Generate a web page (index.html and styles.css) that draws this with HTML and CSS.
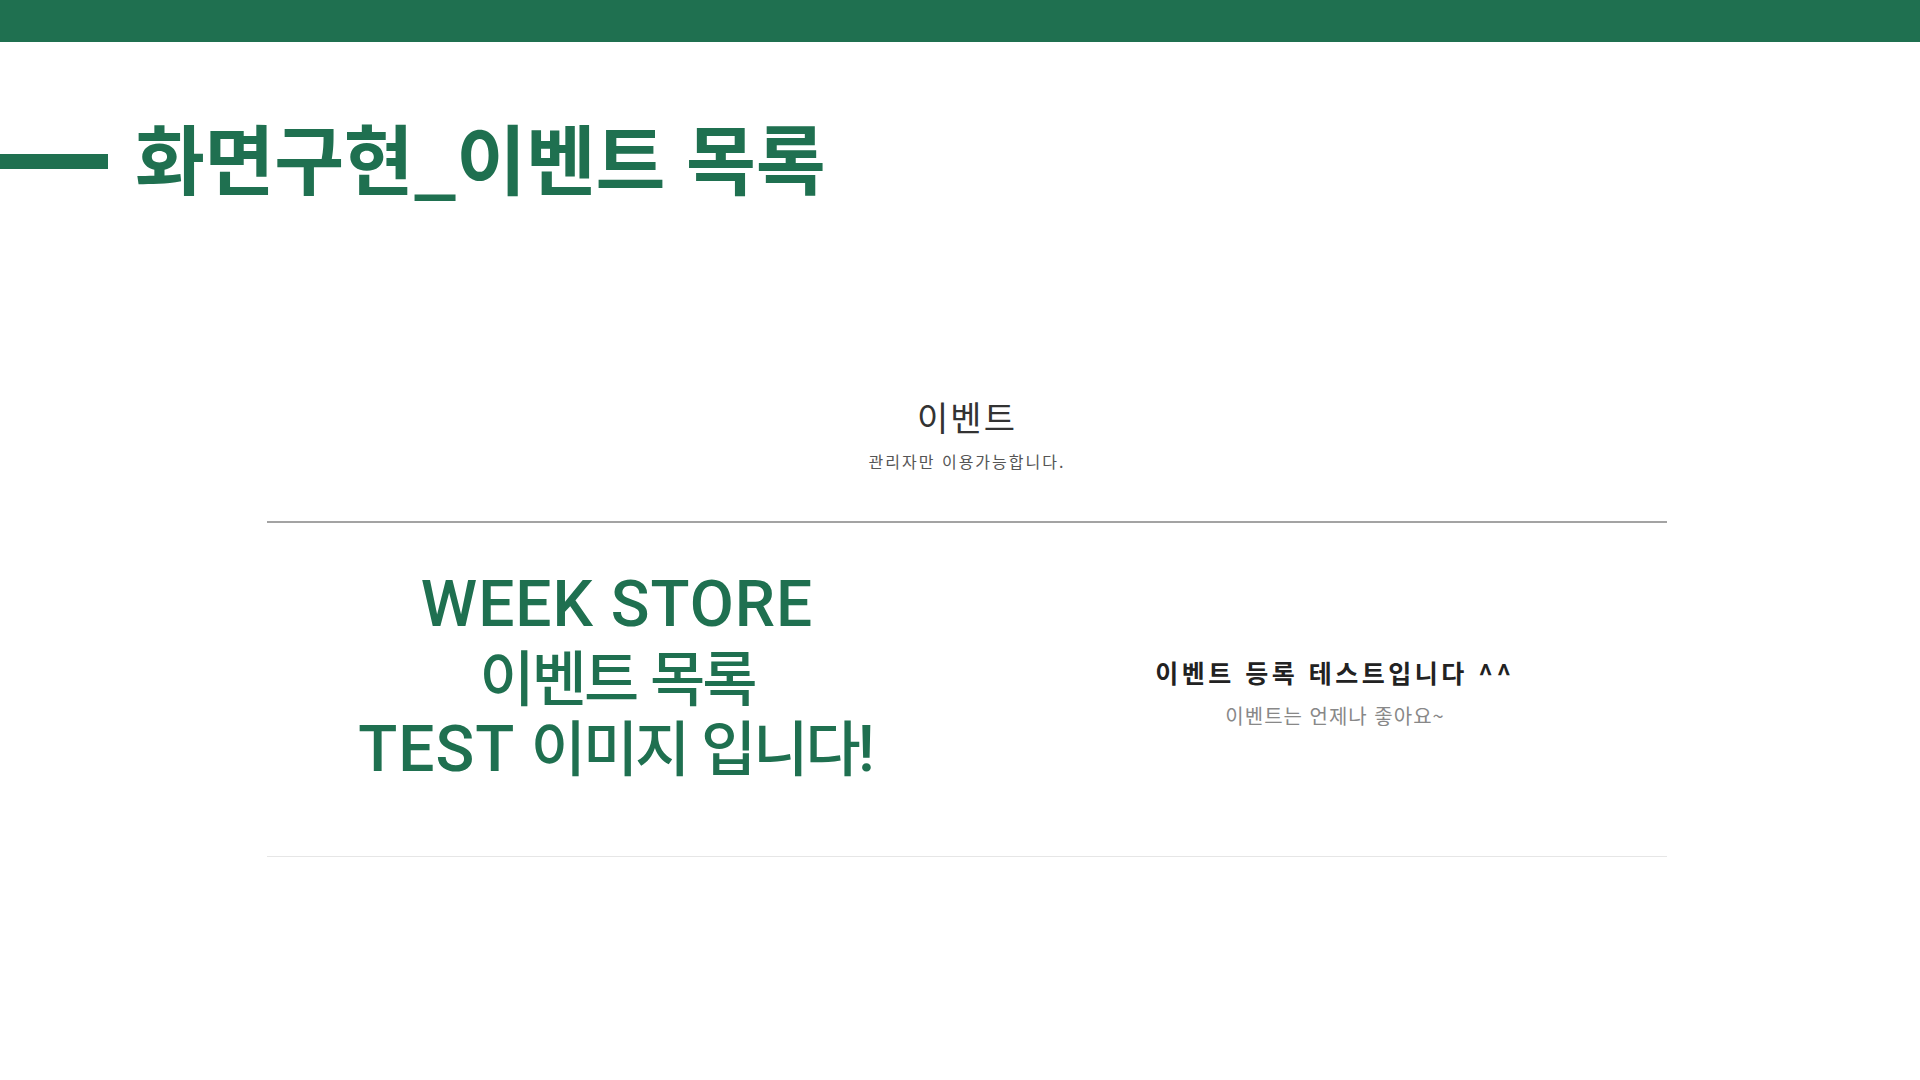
FILE: index.html
```html
<!DOCTYPE html>
<html lang="ko">
<head>
<meta charset="utf-8">
<title>화면구현_이벤트 목록</title>
<link rel="stylesheet" href="styles.css">
</head>
<body>
<div class="topbar"></div>
<header class="slide-title">
  <span class="title-rule"></span>
  <h1 class="title-text">화면구현_이벤트 목록</h1>
</header>
<main class="page">
  <div class="container">
    <section class="board-head">
      <h2 class="board-title">이벤트</h2>
      <p class="board-sub">관리자만 이용가능합니다.</p>
    </section>
    <div class="event-list">
      <article class="event-row">
        <div class="event-thumb">
          <div class="thumb-line">WEEK STORE</div>
          <div class="thumb-line"><span class="ko">이벤트 목록</span></div>
          <div class="thumb-line">TEST <span class="ko">이미지 입니다</span>!</div>
        </div>
        <div class="event-info">
          <h3 class="event-name">이벤트 등록 테스트입니다 ^^</h3>
          <p class="event-desc">이벤트는 언제나 좋아요~</p>
        </div>
      </article>
    </div>
  </div>
</main>
</body>
</html>
```
FILE: styles.css
```css
* { box-sizing: border-box; }
html, body { margin: 0; padding: 0; background: #ffffff; }
body {
  font-family: "Noto Sans CJK KR", "Noto Sans", sans-serif;
  color: #333;
}
.topbar {
  height: 42px;
  background: #1f7050;
}
.slide-title {
  display: flex;
  align-items: center;
  gap: 27px;
  margin-top: 75px;
  height: 78px;
}
.title-rule {
  display: block;
  width: 108px;
  height: 15px;
  margin-top: 10px;
  background: #1f7050;
}
.title-text {
  margin: 0;
  font-size: 76px;
  line-height: 1;
  font-weight: 700;
  color: #1f7050;
  letter-spacing: -0.3px;
}
.page {
  padding-left: 14px;
  margin-top: 205px;
}
.container {
  width: 1400px;
  margin: 0 auto;
}
.board-head {
  text-align: center;
  padding-bottom: 52px;
  border-bottom: 2px solid #a3a3a3;
}
.board-title {
  margin: 0;
  font-size: 34px;
  line-height: 1;
  font-weight: 400;
  color: #333;
  letter-spacing: 2px;
}
.board-sub {
  margin: 19px 0 0;
  font-size: 16px;
  line-height: 1;
  color: #555;
  letter-spacing: 2px;
}
.event-row {
  display: grid;
  grid-template-columns: 700px 1fr;
  height: 334px;
  border-bottom: 1px solid #e6e6e6;
}
.event-thumb {
  padding-top: 47px;
  text-align: center;
  font-family: "Roboto", "Noto Sans CJK KR", sans-serif;
  font-weight: 500;
  font-size: 64px;
  color: #1f7050;
}
.thumb-line {
  height: 70px;
  line-height: 70px;
  letter-spacing: 1px;
  white-space: nowrap;
}
.thumb-line .ko {
  display: inline-block;
  font-family: "Noto Sans CJK KR", sans-serif;
  font-size: 60px;
  font-weight: 500;
  letter-spacing: -3px;
  line-height: 70px;
}
.event-info {
  padding-left: 36px;
  padding-top: 137px;
  text-align: center;
}
.event-name {
  margin: 0;
  font-size: 25px;
  line-height: 1;
  font-weight: 700;
  color: #222;
  letter-spacing: 3.5px;
}
.event-desc {
  margin: 21px 0 0;
  font-size: 20px;
  line-height: 1;
  color: #888;
  letter-spacing: 1px;
}
```
